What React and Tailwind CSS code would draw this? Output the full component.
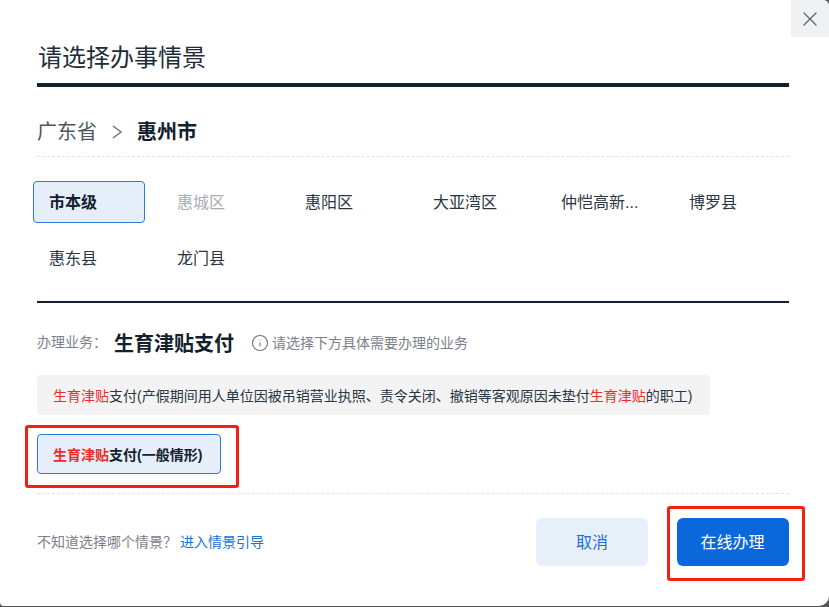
import React from "react";
import { X, Info } from "lucide-react";

const areas = ["市本级", "惠城区", "惠阳区", "大亚湾区", "仲恺高新...", "博罗县", "惠东县", "龙门县"];

const Hl = ({ children }) => <span className="text-[#f02a2a]">{children}</span>;

const App = () => {
  return (
    <div
      className="relative h-[607px] w-[829px] overflow-hidden bg-[#555555] text-[#13202e]"
      style={{ fontFamily: '"Liberation Sans", "Noto Sans CJK SC", sans-serif' }}
    >
      <div className="h-[606px] w-full rounded-tr-[6px] rounded-br-[10px] rounded-bl-[4px] bg-white pl-[37px] pr-[40px]">
        <button className="absolute right-0 top-0 flex h-[37px] w-[38px] items-center justify-center rounded-tr-[6px] bg-[#f0f1f3] text-[#5a6470]">
          <X size={24} strokeWidth={1.25} />
        </button>

        <div className="flex h-[87px] items-end border-b-4 border-[#13202e] pb-[9px]">
          <h1 className="pl-px text-2xl leading-[32px] font-normal text-[#202c38]">请选择办事情景</h1>
        </div>

        <div className="flex h-[70px] items-center border-b border-dashed border-[#e3e5e8] pt-[21px]">
          <span className="text-xl leading-[28px] text-[#4c5661]">广东省</span>
          <svg viewBox="0 0 24 24" className="mx-2 h-6 w-6 text-[#6b7480]" fill="none" stroke="currentColor" strokeWidth="1.5">
            <path d="M8 6l8 6-8 6" />
          </svg>
          <span className="text-xl leading-[28px] font-bold">惠州市</span>
        </div>

        <div className="-ml-1 mt-6 grid grid-cols-[repeat(6,112px)] gap-x-4 gap-y-[14px]">
          {areas.map((a, i) => (
            <div
              key={a}
              className={`flex h-[42px] items-center rounded border pl-[15px] pt-px text-base ${
                i === 0
                  ? "border-[#2a7ae2] bg-[#e6eff9] font-bold"
                  : i === 1
                    ? "border-transparent text-[#a9aeb4]"
                    : "border-transparent text-[#2a3642]"
              }`}
            >
              {a}
            </div>
          ))}
        </div>

        <div className="mt-[22px] h-[2px] bg-[#13202e]" />

        <div className="mt-6 flex h-[34px] items-center">
          <span className="-mt-1 w-[77px] text-sm leading-5 text-[#7a8189]">办理业务：</span>
          <span className="text-xl leading-[28px] font-bold">生育津贴支付</span>
          <Info size={18} strokeWidth={1.5} className="-mt-[2px] ml-[17px] mr-[3px] text-[#6b7480]" />
          <span className="-mt-[2px] text-sm leading-5 text-[#7a8189]">请选择下方具体需要办理的业务</span>
        </div>

        <div className="mt-[14px] flex h-10 w-[673px] items-center rounded bg-[#f3f3f4] px-4 pt-px text-sm text-[#2a3642]">
          <span className="whitespace-nowrap">
            <Hl>生育津贴</Hl>支付(产假期间用人单位因被吊销营业执照、责令关闭、撤销等客观原因未垫付<Hl>生育津贴</Hl>的职工)
          </span>
        </div>

        <div className="mt-[19px] border-b border-dashed border-[#e3e5e8] pb-[19px]">
          <div className="flex h-10 w-[184px] items-center rounded border border-[#2a7ae2] bg-[#e6eff9] pl-[15px] pt-px text-sm font-bold whitespace-nowrap">
            <span>
              <Hl>生育津贴</Hl>支付(一般情形)
            </span>
          </div>
        </div>

        <div className="mt-6 flex items-center">
          <span className="text-sm text-[#7a8189]">不知道选择哪个情景？</span>
          <a className="ml-[3px] text-sm text-[#1a6fd8]" href="#">
            进入情景引导
          </a>
          <button className="ml-auto h-12 w-28 rounded-md bg-[#e7eff9] pt-px text-base text-[#1a6fd8]">取消</button>
          <button className="ml-[29px] h-12 w-28 rounded-md bg-[#0a68da] pt-px pr-px text-base text-white">在线办理</button>
        </div>
      </div>

      {/* red annotation boxes drawn over the dialog */}
      <div className="absolute left-[25px] top-[425px] h-[63px] w-[214px] rounded-[3px] border-[3px] border-[#f5200f]" />
      <div className="absolute left-[667px] top-[506px] h-[75px] w-[138px] rounded-[3px] border-[3px] border-[#f5200f]" />
    </div>
  );
};

export default App;
